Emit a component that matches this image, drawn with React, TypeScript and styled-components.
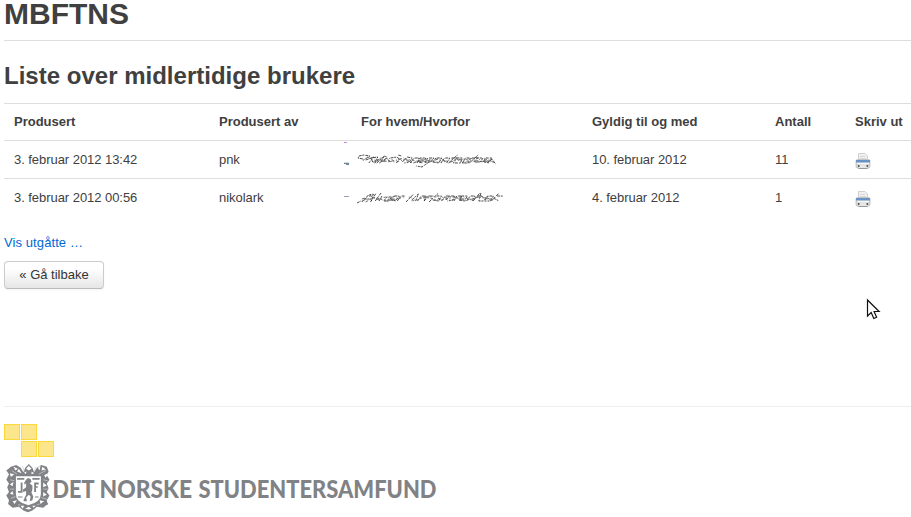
import React from "react";
import styled, { createGlobalStyle } from "styled-components";

const GlobalStyle = createGlobalStyle`
  html, body { margin: 0; padding: 0; background: #fff; overflow: hidden; }
  body {
    font-family: "Liberation Sans", Arial, sans-serif;
    font-size: 13px;
    line-height: 18px;
    color: #404040;
  }
`;

const Page = styled.main`
  position: relative;
  display: flex;
  flex-direction: column;
  height: 517px;
  box-sizing: border-box;
  padding-left: 4px;
  overflow: hidden;
`;

const Title = styled.h1`
  margin: 0;
  height: 40px;
  font-size: 30px;
  line-height: 28px;
  border-bottom: 1px solid #ddd;
`;

const Heading = styled.h2`
  margin: 17px 0 9px;
  font-size: 24px;
  line-height: 36px;
  letter-spacing: 0.01px;
`;

const Table = styled.div`
  display: flex;
  flex-direction: column;
`;

const Row = styled.div<{ $header?: boolean }>`
  display: grid;
  grid-template-columns: 205px 142px 231px 183px 80px 66px;
  box-sizing: border-box;
  height: ${(p) => (p.$header ? 37 : 38)}px;
  padding-top: ${(p) => (p.$header ? 9 : 10)}px;
  border-top: 1px solid #ddd;
  font-weight: ${(p) => (p.$header ? "bold" : "normal")};
  letter-spacing: ${(p) => (p.$header ? "0" : "-0.05px")};
`;

const Cell = styled.div`
  padding-left: 10px;
  white-space: nowrap;
`;

const NoteCell = styled.div`
  svg { display: block; margin: -10px 0 0 -10px; }
`;

const IconCell = styled(Cell)`
  padding-top: 2px;
  svg { display: block; }
`;

const ExpiredLink = styled.a`
  align-self: flex-start;
  margin-top: 18px;
  color: #0069d6;
  text-decoration: none;
  letter-spacing: 0.09px;
`;

const BackButton = styled.button`
  align-self: flex-start;
  box-sizing: border-box;
  width: 100px;
  height: 28px;
  margin-top: 9px;
  padding: 0 0 1px;
  border: 1px solid #ccc;
  border-bottom-color: #bbb;
  border-radius: 4px;
  background: linear-gradient(#fff, #fff 25%, #e6e6e6);
  box-shadow: inset 0 1px 0 rgba(255,255,255,.2), 0 1px 2px rgba(0,0,0,.05);
  color: #333;
  font: 13px/18px "Liberation Sans", Arial, sans-serif;
`;

const Footer = styled.footer`
  margin-top: 117px;
  padding-top: 17px;
  border-top: 1px solid #eee;
  svg { display: block; }
`;

const Brand = styled.div`
  display: flex;
  margin-top: 6px;
`;

const Pointer = styled.svg`
  position: absolute;
  left: 866px;
  top: 298px;
`;

const Printer = () => (
  <svg width="16" height="17" viewBox="0 0 16 17">
    <path d="M3.500 8V.5h6.500L12.500 3v5z" fill="#f0f0f0" stroke="#cfcfcf" />
    <path d="M5 3.500h5M5 5.500h6" stroke="#dadada" />
    <rect x="1" y="6.500" width="14" height="8.500" rx="1.500" fill="#d4d4d4" stroke="#bebebe" strokeWidth=".8" />
    <path d="M1 7h14v2.500H1z" fill="#6993c6" />
    <path d="M2 10.500h12" stroke="#f8f8f8" strokeWidth="1.400" />
    <path d="M2.500 12.500h11" stroke="#bbb" />
    <path d="M4 11.500h8v4H4z" fill="#e7e7e7" />
    <path d="M3 12h1.500v2H3zM11.500 12H13v2h-1.500z" fill="#5c5c5c" />
    <path d="M3.500 15.500h9" stroke="#999" />
  </svg>
);

type Stroke = { d: string; tone?: string };

type ScribbleProps = { strokes: Stroke[]; marks: React.ReactNode; stretch: number };

const Scribble = ({ strokes, marks, stretch }: ScribbleProps) => (
  <svg width="175" height="37" viewBox="341 141 175 37">
    {marks}
    <g transform={`translate(${357 * (1 - stretch)} 0) scale(${stretch} 1)`}>
      {strokes.map((s) => (
        <path key={s.d} d={s.d} fill="none" stroke={s.tone ?? "#333"} strokeWidth=".9" strokeDasharray={s.tone ? "3 2 1 2" : "3 .8 2 1.200"} />
      ))}
    </g>
  </svg>
);

const firstNote: Stroke[] = [
  { d: "M363 159l-5-1 1-2 5-1 6 1-3 2-5 3M366 160l8-3-5 6M373 162l-2-4 7-1-3 6 6-5M377 163l8-7-5 7 7-5" },
  { d: "M384 162l3-4 3 3M391 158l7-1 2 3M399 155l3 1M397 163l4-5M403 162l5-5 5 1-3 4-5 1M411 163l4-5 5 0-2 5" },
  { d: "M419 161h6l2-3-6 0-2 4 5 1M426 163l3-5 6 0-3 4-6 0M430 162l-7 5-6-1" },
  { d: "M434 162l6 1 3-5-6 0-3 4M442 163l4-5 5 0-3 5M450 163l9-8M453 158l6 0M458 158l6 0-2 5-7 0 2-4" },
  { d: "M464 163l3-5 5 0-2 5-6 0M471 163l9-8M474 158l6 0M478 158l7 0-3 4-6 0M485 161l7 0 2-3-7 0-1 4 6 1M490 162l4-3 3 4" },
  { d: "M367 157l10 4 7-4 7 5M385 156l10 5 9-3 10 5 9-4 10 3 8-4 9 5 8-4 8 4 8-5 8 4 8-3 8 5", tone: "#666" },
  { d: "M373 162l12-1 12 1 10-3 16 3 14-3 14 3 14-3 14 3 14-1", tone: "#666" },
  { d: "M376 159l12 3 14-3 12 4 14-4 14 4 14-5 14 4 14-3", tone: "#777" },
];

const secondNote: Stroke[] = [
  { d: "M357 165l4-2M362 164l7-7 5-1-2 7M364 161l8 0M371 164l6-9M376 163l6-8M380 163l3-5M385 163l3-4 5 0-3 4-6 0" },
  { d: "M391 162l7 0 3-4-6 0-2 4 5 1M399 163l4-5 4 0M408 164l8-8M414 162l7-6-3 7M420 163l4-5 5 0-2 5M427 163l4-5 4 0" },
  { d: "M432 164l10-9M436 162l6 1 3-5-6 0M445 163l4-5 4 0M450 162l3-4 6 0-2 4-6 1M458 163l3-5 5 0-2 5" },
  { d: "M463 161l7 0 2-3-6 0-2 4 5 1M471 163l4-5 5 0-3 5M478 163l7-8M482 158l5 0M486 155l-2 8 5 0 5-5" },
  { d: "M490 162l3-4 6 0-3 5-6 0M497 163l8-8M499 160l6 3M503 158l7 0" },
  { d: "M362 161l9-3 7 3 9-2 9 3 10-3M366 164l10-5 11 4 10-5M411 159l9 3 9-4 10 4 8-3 10 3 9-4 10 4 10-4 12 4", tone: "#666" },
  { d: "M370 157l10 5M426 160l10-2 10 4 12-3 12 3 14-3 14 2", tone: "#666" },
  { d: "M362 163l14-3 12 3 14-4M414 163l14-4 14 4 14-5 14 5 14-4 14 3", tone: "#777" },
];

const Squares = () => (
  <svg width="50" height="33" viewBox="0 0 50 33">
    {[[0, 0], [17, 0], [17, 17], [34, 17]].map(([x, y]) => (
      <rect key={`${x}-${y}`} x={x + 0.5} y={y + 0.5} width="15" height="15" fill="#fce68c" stroke="#fcd93a" />
    ))}
  </svg>
);

const Crest = () => (
  <svg width="49" height="51" viewBox="0 0 49 51">
    <g transform="translate(2.300 1) scale(.9 .93)">
      <path fill="#808285" d="M5 3l6-2 5 3 3 5 2-5 4-4 4 4 2 5 3-5 5-3 6 2 2 5-2 4 3 5-3 4 2 5-2 4 3 4-3 5 1 4-5 4-7-1-5 4-5 2-5-2-5-4-7 1-5-4 1-4-3-5 3-4-2-5 2-4-3-4 3-6-3-4z" />
      <path d="M10 12.500h29v20q0 9-14.500 12.500Q10 41.500 10 32.500z" fill="#fff" stroke="#808285" strokeWidth="1.200" />
      <g fill="#808285">
        <path d="M12 15h8v2h-8zM29 15h8v2h-8zM16 20h2v11h-2zM13 29h3v2h-3zM31 20h5v2h-5zM31 22h2v8h-2zM31 24h4v1.500h-4zM13 35h5v1h-5zM32 35h4v1h-4z" />
        <path d="M22 17l2-2 3 1 1 3-2 2 3 2 0 4-1 4 2 4-1 4-3 1 1-5-2-2-3 3 1 4-4 0 1-3 2-4 0-4-3 1-1-2 4-3 0-4-2 1 0-2z" />
      </g>
      <g fill="#fff">
        <path d="M1 1h5l-4 4zM8 3l5 2-3 2zM14 5l3 5-5-2zM22 5l3-3 3 3-3 2zM20 9l3-1-2 3zM28 8l3 2-3 1zM35 4l3-2-1 5zM40 3l4 3-5 1zM4 10l5 1-4 3zM42 12l4-2-2 5zM4 22l4-3-1 5zM41 20l4 3-4 2zM4 32l3-3 1 4zM41 30l4 3-4 2zM7 40l5-1-3 4zM37 39l5 1-4 3zM16 45l4 0-2 3zM29 45l4 0-3 2zM21 48l4-2 3 2-3 1z" />
      </g>
      <path d="M6 7l6 4M36 11l8-4M4 17l5 1M41 17l5 1M4 27l5 0M41 27l5 0M5 37l5-2M39 36l6 2M13 44l3 0M34 44l3-1M18 2l2 6M31 8l2-5" stroke="#d0d1d2" fill="none" strokeWidth=".8" />
      <path d="M3 43l5-1M40 42l6 1" stroke="#808285" strokeWidth="2" fill="none" />
    </g>
  </svg>
);

const words = [
  { text: "DET", x: -0.5, width: 42 },
  { text: "NORSKE", x: 46.5, width: 92.5 },
  { text: "STUDENTERSAMFUND", x: 145.5, width: 238 },
];

const Wordmark = () => (
  <svg width="388" height="51" viewBox="0 0 388 51">
    {words.map((w) => (
      <text key={w.text} x={w.x} y="35" fontFamily="Lato, sans-serif" fontWeight="900" fontSize="25.500" fill="#808285" textLength={w.width} lengthAdjust="spacingAndGlyphs">
        {w.text}
      </text>
    ))}
  </svg>
);

export default function App() {
  return (
    <>
      <GlobalStyle />
      <Page>
        <Title>MBFTNS</Title>
        <Heading>Liste over midlertidige brukere</Heading>
        <Table>
          <Row $header>
            <Cell>Produsert</Cell>
            <Cell>Produsert av</Cell>
            <Cell>For hvem/Hvorfor</Cell>
            <Cell>Gyldig til og med</Cell>
            <Cell>Antall</Cell>
            <Cell>Skriv ut</Cell>
          </Row>
          <Row>
            <Cell>3. februar 2012 13:42</Cell>
            <Cell>pnk</Cell>
            <NoteCell>
              <Scribble
                strokes={firstNote}
                stretch={0.985}
                marks={
                  <>
                    <path d="M344 142.500h3" stroke="#c68be0" />
                    <path d="M344 162.500h5" stroke="#c4e0e8" />
                    <path d="M344 163.500h5M346 164.500h3" stroke="#7b8494" />
                  </>
                }
              />
            </NoteCell>
            <Cell>10. februar 2012</Cell>
            <Cell>11</Cell>
            <IconCell><Printer /></IconCell>
          </Row>
          <Row>
            <Cell>3. februar 2012 00:56</Cell>
            <Cell>nikolark</Cell>
            <NoteCell>
              <Scribble strokes={secondNote} stretch={0.96} marks={<path d="M344 158.500h5" stroke="#9aa0b2" />} />
            </NoteCell>
            <Cell>4. februar 2012</Cell>
            <Cell>1</Cell>
            <IconCell><Printer /></IconCell>
          </Row>
        </Table>
        <ExpiredLink href="#">Vis utgåtte …</ExpiredLink>
        <BackButton>« Gå tilbake</BackButton>
        <Footer>
          <Squares />
          <Brand>
            <Crest />
            <Wordmark />
          </Brand>
        </Footer>
        <Pointer width="15" height="23" viewBox="0 0 15 23">
          <path d="M1.500 2v16l3.700-3.500 2.600 6 2.800-1.200-2.500-5.800h5z" fill="#fff" stroke="#111" strokeWidth="1.200" />
        </Pointer>
      </Page>
    </>
  );
}
